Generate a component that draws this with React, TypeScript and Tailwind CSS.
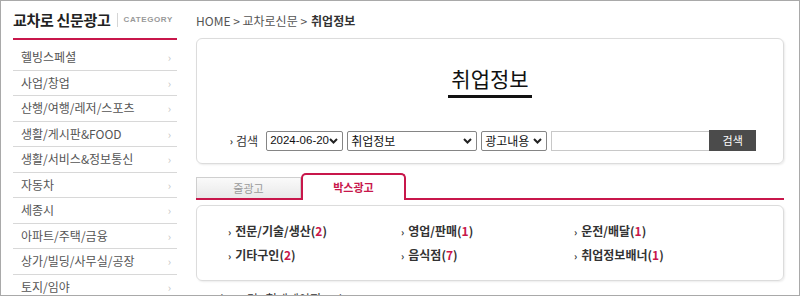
import React from 'react';

const menu = [
  '헬빙스페셜',
  '사업/창업',
  '산행/여행/레저/스포츠',
  '생활/게시판&FOOD',
  '생활/서비스&정보통신',
  '자동차',
  '세종시',
  '아파트/주택/금융',
  '상가/빌딩/사무실/공장',
  '토지/임야',
];

const jobs = [
  { name: '전문/기술/생산', count: 2 },
  { name: '영업/판매', count: 1 },
  { name: '운전/배달', count: 1 },
  { name: '기타구인', count: 2 },
  { name: '음식점', count: 7 },
  { name: '취업정보배너', count: 1 },
];

const font = { fontFamily: '"Noto Sans CJK KR", "Noto Sans", sans-serif' };

const Chevron = () => (
  <svg width="9" height="6" viewBox="0 0 9 6" className="ml-auto shrink-0">
    <path d="M1 1l3.5 3.5L8 1" fill="none" stroke="#222" strokeWidth="2" />
  </svg>
);

const FakeSelect: React.FC<{ label: string; w: string; latin?: boolean }> = ({ label, w, latin }) => (
  <div className={`${w} h-[20px] border border-[#858585] rounded-[2px] bg-white flex items-center pl-[3px] pr-[4px] text-[12px] text-[#111] whitespace-nowrap`}>
    <span
      className="leading-none"
      style={latin ? { fontFamily: '"Liberation Sans", sans-serif', fontSize: '11.5px' } : undefined}
    >
      {label}
    </span>
    <Chevron />
  </div>
);

const App: React.FC = () => {
  return (
    <div style={font} className="w-[800px] h-[296px] border border-[#a9a9a9] bg-white flex overflow-hidden">
      {/* Sidebar */}
      <aside className="w-[164px] ml-[12px] shrink-0">
        <div className="h-[37px] flex items-center pt-[1px]">
          <span className="text-[15px] font-bold text-[#222] tracking-[-0.3px]">교차로 신문광고</span>
          <span className="w-px h-[14px] bg-[#d5d5d5] mx-[6px]" />
          <span className="text-[8px] text-[#999] tracking-[0.6px] font-semibold" style={{ fontFamily: '"Liberation Sans", sans-serif' }}>
            CATEGORY
          </span>
        </div>
        <div className="h-[2px] bg-[#c8174b]" />
        <ul className="mt-[5px]">
          {menu.map((m) => (
            <li key={m} className="h-[25.5px] border-b border-[#d8d8d8] flex items-center pl-[8px] pr-[6px] text-[12px] text-[#555]">
              <span className="leading-none">{m}</span>
              <span className="ml-auto text-[#c4c4c4] text-[11px]">›</span>
            </li>
          ))}
        </ul>
      </aside>

      {/* Main */}
      <main className="ml-[19px] w-[588px] shrink-0">
        <div className="h-[37px] flex items-center text-[12px] text-[#555] pt-[2px]">
          HOME &gt; 교차로신문 &gt; <b className="ml-[4px] text-[#333]">취업정보</b>
        </div>

        <section className="h-[126px] border border-[#dcdcdc] rounded-[6px] shadow-[1px_1px_2px_rgba(0,0,0,0.08)] flex flex-col items-center">
          <h1 className="mt-[26px] text-[21px] leading-[26px] text-[#111] font-normal">취업정보</h1>
          <div className="w-[84px] h-[3px] bg-[#111] mt-[4px]" />
          <div className="mt-[32px] flex items-center gap-[4px] ml-[6px]">
            <span className="text-[12px] text-[#333] mr-[4px] flex items-center">
              <span className="text-[10px] font-bold mr-[3px]">›</span>검색
            </span>
            <FakeSelect label="2024-06-20" w="w-[77px]" latin />
            <FakeSelect label="취업정보" w="w-[130px]" />
            <FakeSelect label="광고내용" w="w-[66px]" />
            <div className="w-[159px] h-[20px] border border-[#c8c8c8] bg-white" />
            <div className="w-[47px] h-[21px] bg-[#4b4b4b] text-white text-[11px] flex items-center justify-center ml-[-5px]">
              검색
            </div>
          </div>
        </section>

        {/* Tabs */}
        <div className="mt-[11px] h-[25px] flex items-end border-b-2 border-[#c8174b]">
          <div className="w-[105px] h-[21px] border border-b-0 border-[#cfcfcf] bg-gradient-to-b from-[#fafafa] to-[#e9e9e9] text-[11px] text-[#9a9a9a] flex items-center justify-center">
            줄광고
          </div>
          <div className="w-[105px] h-[27px] border-2 border-b-0 border-[#c8174b] rounded-t-[5px] bg-white text-[11px] font-bold text-[#c8174b] flex items-center justify-center mb-[-2px]">
            박스광고
          </div>
        </div>

        <section className="mt-[5px] h-[76px] border border-[#dcdcdc] rounded-[6px] shadow-[1px_1px_2px_rgba(0,0,0,0.08)] grid grid-cols-[173px_173px_173px] content-center gap-y-[6px] pl-[31px]">
          {jobs.map((j) => (
            <div key={j.name} className="text-[12px] font-semibold text-[#333] flex items-center">
              <span className="text-[10px] font-bold text-[#333] mr-[4px]">›</span>
              {j.name}(<span className="text-[#c8174b]">{j.count}</span>)
            </div>
          ))}
        </section>

        <div className="mt-[9px] text-[12px] text-[#333]">
          Total : <b>14</b>건 &nbsp; 현재페이지 : <b>1/2</b>
        </div>
      </main>
    </div>
  );
};

export default App;
